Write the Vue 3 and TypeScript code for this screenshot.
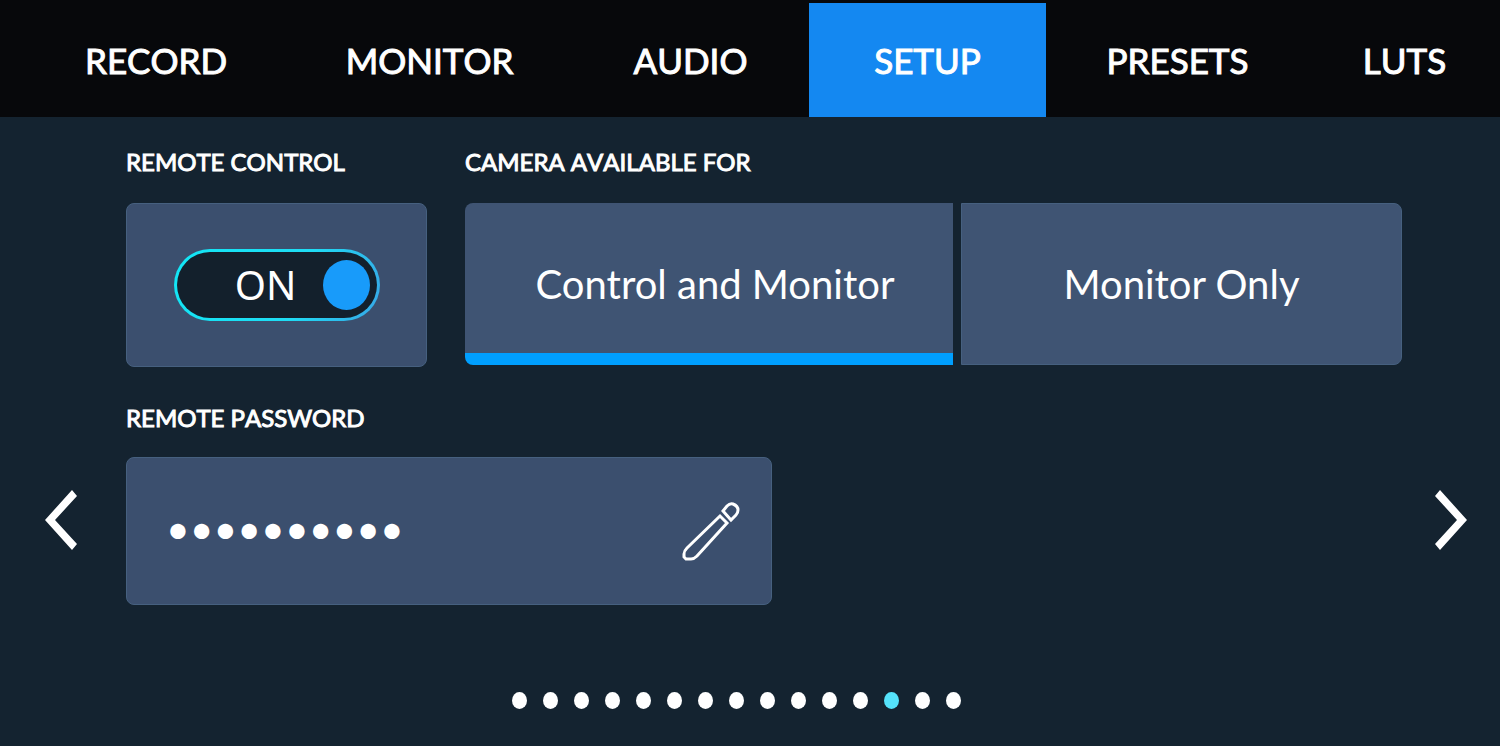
<script setup lang="ts">
import { ref } from 'vue'

const tabs = ['RECORD', 'MONITOR', 'AUDIO', 'SETUP', 'PRESETS', 'LUTS']
const activeTab = ref('SETUP')

const remoteOn = ref(true)
const modes = [
  { id: 'control', label: 'Control and Monitor' },
  { id: 'monitor', label: 'Monitor Only' },
]
const mode = ref('control')
const password = ref('camera1234')
const passwordField = ref<HTMLInputElement | null>(null)

const pageCount = 15
const page = ref(13)

function turn(step: number) {
  page.value = Math.min(pageCount, Math.max(1, page.value + step))
}
</script>

<template>
  <div class="screen">
    <nav class="tabs">
      <button
        v-for="tab in tabs"
        :key="tab"
        type="button"
        class="tab"
        :class="{ active: tab === activeTab }"
        @click="activeTab = tab"
      >
        {{ tab }}
      </button>
    </nav>

    <main class="panel">
      <div class="settings">
        <section class="group">
          <h2 class="title">REMOTE CONTROL</h2>
          <div class="card toggle-card">
            <label class="toggle">
              <input v-model="remoteOn" type="checkbox" class="hidden-input" aria-label="Remote control" />
              <span class="state">{{ remoteOn ? 'ON' : 'OFF' }}</span>
              <span class="knob"></span>
            </label>
          </div>
        </section>

        <fieldset class="group">
          <legend class="title">CAMERA AVAILABLE FOR</legend>
          <div class="modes">
            <label v-for="m in modes" :key="m.id" class="mode" :class="{ selected: m.id === mode }">
              <input v-model="mode" type="radio" name="mode" :value="m.id" class="hidden-input" />
              {{ m.label }}
            </label>
          </div>
        </fieldset>
      </div>

      <button type="button" class="arrow previous" aria-label="Previous page" @click="turn(-1)">
        <svg width="32" height="60" viewBox="0 0 32 60"><path d="M27 0 32 6 10 30 32 54 27 60 0 30Z" fill="#fff" /></svg>
      </button>

      <section class="group password">
        <label for="remote-password" class="title">REMOTE PASSWORD</label>
        <div class="card password-card">
          <input id="remote-password" ref="passwordField" v-model="password" type="password" class="secret" />
          <button type="button" class="edit" aria-label="Edit password" @click="passwordField?.focus()">
            <svg width="58" height="60" viewBox="0 0 58 60" fill="none" stroke="#fff" stroke-width="3">
              <path d="M38 15 5 47Q2 50 2 53V56L4 58H9Q12 58 15 55L45 22Z" />
              <path d="M41 10 45 5Q48 2 51 3Q56 5 56 9Q56 12 54 14L49 19Z" />
            </svg>
          </button>
        </div>
      </section>

      <button type="button" class="arrow next" aria-label="Next page" @click="turn(1)">
        <svg width="32" height="60" viewBox="0 0 32 60"><path d="M5 0 0 6 22 30 0 54 5 60 32 30Z" fill="#fff" /></svg>
      </button>

      <div class="pager">
        <button
          v-for="n in pageCount"
          :key="n"
          type="button"
          class="dot"
          :class="{ current: n === page }"
          :aria-label="`Page ${n}`"
          @click="page = n"
        ></button>
      </div>
    </main>
  </div>
</template>

<style>
body {
  margin: 0;
  background: #142330;
}
</style>

<style scoped>
.screen {
  display: flex;
  flex-direction: column;
  min-height: 100vh;
  background: #142330;
  color: #fff;
  font-family: Lato, "Open Sans", sans-serif;
}

button {
  padding: 0;
  border: 0;
  background: none;
  color: inherit;
  font: inherit;
  cursor: pointer;
}

.tabs {
  display: grid;
  grid-template-columns: 262fr 285fr 237fr 237fr 263fr 191fr;
  height: 117px;
  box-sizing: border-box;
  padding: 3px 0 0 25px;
  background: #07080b;
}

.tab {
  font-size: 35px;
  font-kerning: none;
  line-height: 114px;
  -webkit-text-stroke: 1px currentColor;
}

.tab.active {
  background: #1488f1;
}

.panel {
  flex: 1;
  display: grid;
  grid-template-columns: 126px 1fr 98px;
  grid-template-rows: 278px 250px auto;
}

.settings {
  grid-column: 2;
  display: grid;
  grid-template-columns: 301fr 937fr;
  gap: 38px;
  padding-top: 28px;
}

.group {
  display: flex;
  flex-direction: column;
  min-width: 0;
  margin: 0;
  padding: 0;
  border: 0;
}

.title {
  display: block;
  height: 34px;
  margin: 0 0 24px;
  padding: 0;
  font-size: 24px;
  font-weight: 400;
  font-kerning: none;
  line-height: 34px;
  -webkit-text-stroke: 1px currentColor;
}

.card {
  display: flex;
  align-items: center;
  box-sizing: border-box;
  border: 1px solid #46607f;
  border-radius: 8px;
  background: #3b4f6e;
}

.toggle-card {
  justify-content: center;
  height: 164px;
}

.hidden-input {
  position: absolute;
  width: 1px;
  height: 1px;
  margin: 0;
  opacity: 0;
}

.toggle {
  display: flex;
  align-items: center;
  justify-content: flex-end;
  gap: 26px;
  box-sizing: border-box;
  width: 206px;
  height: 72px;
  padding-right: 7px;
  border: 3px solid transparent;
  border-radius: 36px;
  background:
    linear-gradient(#13202c, #13202c) padding-box,
    linear-gradient(110deg, #12e6f5 0%, #1fdcf4 60%, #37a6e6 100%) border-box;
  cursor: pointer;
}

.state {
  font-family: "Noto Sans", "Open Sans", sans-serif;
  font-size: 40px;
  line-height: 50px;
}

.knob {
  width: 47px;
  height: 50px;
  border-radius: 50%;
  background: #189bfa;
}

.modes {
  display: grid;
  grid-template-columns: 488fr 441fr;
  gap: 8px;
}

.mode {
  display: flex;
  align-items: center;
  justify-content: center;
  box-sizing: border-box;
  height: 162px;
  border: 1px solid #46607f;
  border-radius: 0 8px 8px 0;
  background: #3f5473;
  font-size: 40px;
  cursor: pointer;
}

.mode:first-child {
  padding-left: 12px;
  border-radius: 8px 0 0 8px;
}

.mode.selected {
  border-width: 0;
  background: linear-gradient(#009fff, #009fff) bottom / 100% 12px no-repeat, #3f5473;
}

.arrow {
  grid-row: 2;
  display: flex;
  align-items: center;
  justify-content: center;
}

.previous {
  grid-column: 1;
  padding-right: 4px;
}

.next {
  grid-column: 3;
}

.password {
  grid-row: 2;
  grid-column: 2;
  padding-top: 6px;
}

.password .title {
  margin-bottom: 22px;
}

.password-card {
  justify-content: space-between;
  width: calc(50% + 8px);
  height: 148px;
  padding: 0 31px 0 39px;
}

.secret {
  flex: 1;
  min-width: 0;
  padding: 0 0 6px;
  border: 0;
  outline: 0;
  background: none;
  color: #fff;
  font-family: Lato, sans-serif;
  font-size: 41px;
}

.edit {
  display: flex;
}

.pager {
  grid-column: 1 / -1;
  display: flex;
  align-items: center;
  justify-content: center;
  gap: 16px;
  height: 110px;
  padding-right: 28px;
}

.dot {
  width: 15px;
  height: 17px;
  border-radius: 50%;
  background: #fff;
}

.dot.current {
  background: #55e2fa;
}
</style>
